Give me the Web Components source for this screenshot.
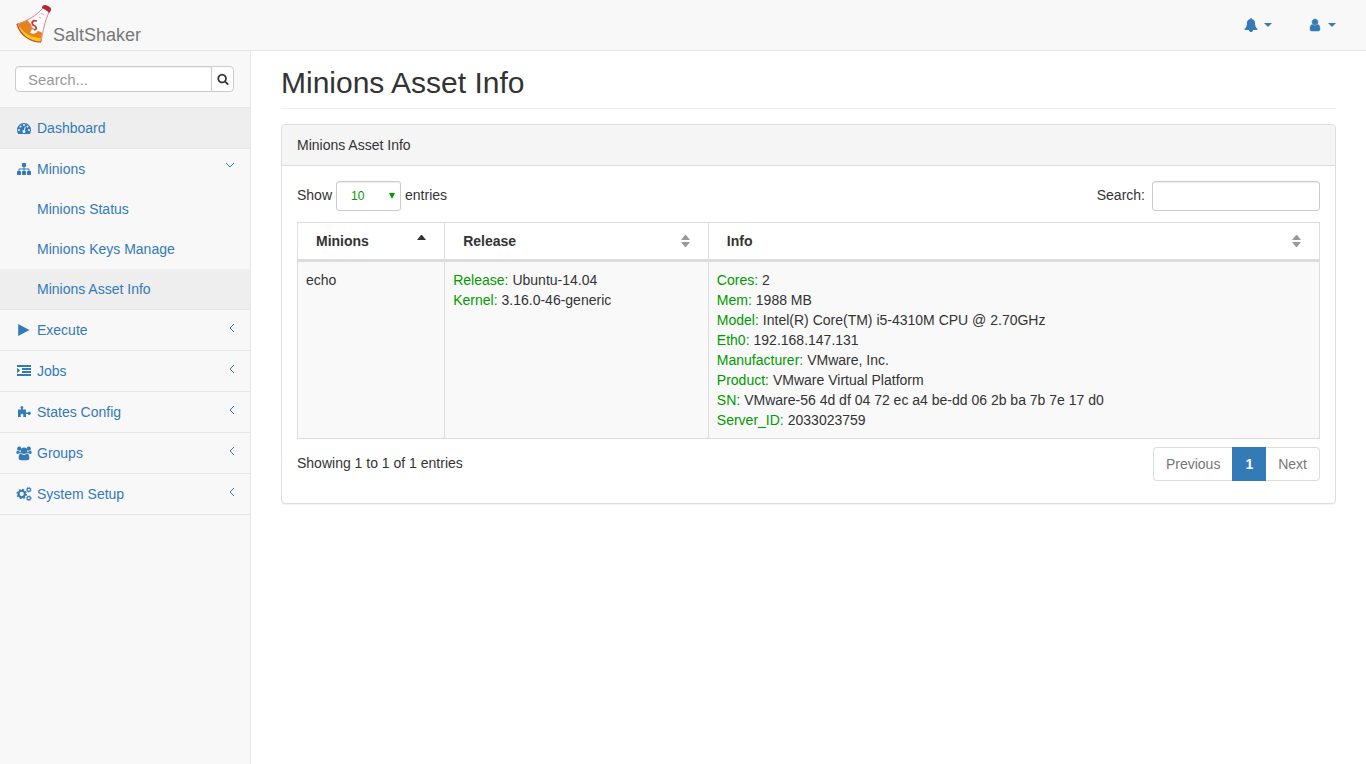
<!DOCTYPE html>
<html lang="en">
<head>
<meta charset="utf-8">
<meta name="viewport" content="width=device-width, initial-scale=1">
<title>SaltShaker - Minions Asset Info</title>
<style>
body { margin: 0; font: 14px/20px "Liberation Sans", Arial, sans-serif; color: #333; background: #fff; }
</style>
</head>
<body>
<salt-app>
  <salt-navbar slot="top"></salt-navbar>
  <salt-sidebar slot="side">
    <salt-nav-item icon="dashboard" active>Dashboard</salt-nav-item>
    <salt-nav-item icon="sitemap" arrow="down">Minions
      <salt-sub-item slot="sub">Minions Status</salt-sub-item>
      <salt-sub-item slot="sub">Minions Keys Manage</salt-sub-item>
      <salt-sub-item slot="sub" active>Minions Asset Info</salt-sub-item>
    </salt-nav-item>
    <salt-nav-item icon="play" arrow="left">Execute</salt-nav-item>
    <salt-nav-item icon="indent" arrow="left">Jobs</salt-nav-item>
    <salt-nav-item icon="puzzle" arrow="left">States Config</salt-nav-item>
    <salt-nav-item icon="users" arrow="left">Groups</salt-nav-item>
    <salt-nav-item icon="cogs" arrow="left">System Setup</salt-nav-item>
  </salt-sidebar>
  <salt-heading>Minions Asset Info</salt-heading>
  <salt-panel><span slot="title">Minions Asset Info</span><salt-asset-table></salt-asset-table></salt-panel>
</salt-app>
<script>
const ICONS = {
  bell: '<path d="M1728 1408q0 52-38 90t-90 38h-448q0 106-75 181t-181 75-181-75-75-181h-448q-52 0-90-38t-38-90q50-42 91-88t85-119.500 74.500-158.500 50-206 19.500-260q0-152 117-282.500t307-158.500q-8-19-8-39 0-40 28-68t68-28 68 28 28 68q0 20-8 39 190 28 307 158.500t117 282.500q0 139 19.500 260t50 206 74.500 158.500 85 119.500 91 88z"/>',
  user: '<path d="M1536 1399q0 109-62.500 187t-150.500 78h-854q-88 0-150.500-78t-62.500-187q0-85 8.500-160.500t31.500-152 58.500-131 94-89 134.500-34.500q131 128 313 128t313-128q76 0 134.500 34.500t94 89 58.500 131 31.500 152 8.500 160.500zm-256-887q0 159-112.500 271.500t-271.500 112.500-271.500-112.500-112.500-271.500 112.500-271.500 271.500-112.500 271.500 112.500 112.500 271.500z" stroke="currentColor" stroke-width="60"/>',
  search: '<path d="M1216 832q0-185-131.500-316.500t-316.500-131.500-316.500 131.500-131.500 316.500 131.500 316.500 316.500 131.500 316.500-131.500 131.500-316.500zm512 832q0 52-38 90t-90 38q-54 0-90-38l-343-342q-179 124-399 124-143 0-273.500-55.500t-225-150-150-225-55.500-273.500 55.500-273.500 150-225 225-150 273.500-55.500 273.500 55.500 225 150 150 225 55.500 273.500q0 220-124 399l343 343q37 37 37 90z"/>',
  dashboard: '<path d="M384 1152q0-53-37.500-90.500t-90.500-37.500-90.500 37.500-37.500 90.500 37.500 90.500 90.500 37.500 90.500-37.500 37.500-90.500zm192-448q0-53-37.500-90.500t-90.500-37.500-90.500 37.500-37.500 90.500 37.500 90.500 90.500 37.500 90.500-37.500 37.500-90.500zm428 481l101-382q6-26-7.500-48.500t-38.500-29.500-48 6.500-30 39.500l-101 382q-60 5-107 43.500t-63 98.500q-20 77 20 146t117 89 146-20 89-117q16-60-6-117t-72-91zm660-33q0-53-37.500-90.500t-90.500-37.500-90.500 37.500-37.500 90.500 37.500 90.500 90.500 37.500 90.500-37.500 37.500-90.500zm-640-640q0-53-37.500-90.500t-90.500-37.500-90.500 37.500-37.500 90.500 37.500 90.500 90.500 37.500 90.500-37.500 37.500-90.500zm448 192q0-53-37.500-90.500t-90.500-37.500-90.500 37.500-37.500 90.500 37.500 90.500 90.500 37.500 90.500-37.500 37.500-90.500zm320 448q0 261-141 483-19 29-54 29h-1402q-35 0-54-29-141-221-141-483 0-182 71-348t191-286 286-191 348-71 348 71 286 191 191 286 71 348z"/>',
  sitemap: '<path d="M1792 1248v320q0 40-28 68t-68 28h-320q-40 0-68-28t-28-68v-320q0-40 28-68t68-28h96v-192h-512v192h96q40 0 68 28t28 68v320q0 40-28 68t-68 28h-320q-40 0-68-28t-28-68v-320q0-40 28-68t68-28h96v-192h-512v192h96q40 0 68 28t28 68v320q0 40-28 68t-68 28h-320q-40 0-68-28t-28-68v-320q0-40 28-68t68-28h96v-192q0-52 38-90t90-38h512v-192h-96q-40 0-68-28t-28-68v-320q0-40 28-68t68-28h320q40 0 68 28t28 68v320q0 40-28 68t-68 28h-96v192h512q52 0 90 38t38 90v192h96q40 0 68 28t28 68z"/>',
  play: '<path d="M150 130L1590 896 150 1662z"/>',
  indent: '<path d="M0 128h1792v256H0zM640 512h1152v256H640zM640 896h1152v256H640zM0 1280h1792v256H0zM0 480l400 352-400 352z"/>',
  puzzle: '<path d="M128 576H520V450A180 180 0 1 1 740 450V576H1150V960H1400A200 200 0 1 1 1400 1160H1150V1536H800V1380A180 180 0 1 0 480 1380V1536H128z"/>',
  users: '<g transform="translate(896 896) scale(1.080) translate(-896 -896)"><circle cx="896" cy="640" r="384"/><circle cx="330" cy="384" r="256"/><circle cx="1462" cy="384" r="256"/><path d="M540 960c100 100 220 160 356 160s256-60 356-160c200 10 284 240 284 500 0 200-110 300-260 300H516c-150 0-260-100-260-300 0-260 84-490 284-500zM430 930C220 930 200 1024 128 1024 50 1024 0 960 0 860c0-170 40-260 110-260 110 110 260 150 370 100 0 90 20 170 80 230zM1362 930c210 0 230 94 302 94 78 0 128-64 128-164 0-170-40-260-110-260-110 110-260 150-370 100 0 90-20 170-80 230z"/></g>',
  cogs: '<g fill="none" stroke="currentColor"><circle cx="600" cy="896" r="410" stroke-width="270"/><circle cx="600" cy="896" r="590" stroke-width="170" stroke-dasharray="232 232"/><circle cx="1510" cy="350" r="215" stroke-width="150"/><circle cx="1510" cy="350" r="315" stroke-width="90" stroke-dasharray="124 124"/><circle cx="1510" cy="1440" r="215" stroke-width="150"/><circle cx="1510" cy="1440" r="315" stroke-width="90" stroke-dasharray="124 124"/></g>'
};

function define(name, markup, setup) {
  const template = document.createElement('template');
  template.innerHTML = markup;
  customElements.define(name, class extends HTMLElement {
    static observedAttributes = ['name', 'icon'];
    constructor() {
      super();
      this.attachShadow({ mode: 'open' }).append(template.content.cloneNode(true));
    }
    connectedCallback() { if (setup) setup(this, this.shadowRoot); }
    attributeChangedCallback() { if (setup) setup(this, this.shadowRoot); }
  });
}

define('salt-icon', `
<style>
:host { display: inline-block; width: 14px; height: 14px; flex: none; }
svg { display: block; width: 100%; height: 100%; fill: currentColor; overflow: visible; }
</style>
<svg viewBox="0 0 1792 1792" aria-hidden="true"></svg>`,
(host, root) => { root.querySelector('svg').innerHTML = ICONS[host.getAttribute('name')] || ''; });

define('salt-app', `
<style>
:host { display: flex; flex-direction: column; min-height: 100vh; }
.body { display: flex; flex: 1; }
main { flex: 1; min-width: 0; padding: 0 30px; border-left: 1px solid #e7e7e7; }
</style>
<slot name="top"></slot>
<div class="body"><slot name="side"></slot><main><slot></slot></main></div>`);

define('salt-navbar', `
<style>
:host { display: block; background: #f8f8f8; border-bottom: 1px solid #e7e7e7; }
header { display: flex; align-items: center; justify-content: space-between; height: 50px; padding: 0 30px 0 15px; }
.brand { display: flex; align-items: center; color: #777; font-size: 18px; text-decoration: none; }
.brand span { padding-top: 20px; }
.brand svg { width: 38px; height: 42px; margin-bottom: 2px; }
nav { display: flex; gap: 36px; }
button { display: flex; align-items: center; gap: 6px; padding: 0; border: 0; background: none; color: #337ab7; }
button::after { content: ""; border: 4px solid transparent; border-top-color: currentColor; border-bottom: 0; }
</style>
<header>
  <a class="brand" href="#">
    <svg viewBox="0 0 38 42" aria-hidden="true">
      <path d="M2 21C12 18 21 13 28 5l6 4c-4 9-6 18-8 30C15 39 5 32 2 21z" fill="#fff" stroke="#d98088" stroke-width="1"/>
      <path d="M3 21c5-2 9-3 12-5 0 5 5 4 5 9 0 3 5 3 7 5l-1 9C15 38 6 31 3 21z" fill="#e58123"/>
      <path d="M3 22c6 8 13 13 23 13l-1 4C14 38 6 31 3 22z" fill="#fbcb0a"/>
      <path d="M2 21c3 11 13 18 24 18" fill="none" stroke="#bd4b3d" stroke-width="1.200"/>
      <path d="M14 19c3-2 5-2 4 2 0 4 4 2 3 6-1 2-3 2-5 1" fill="none" stroke="#fff" stroke-width="4"/>
      <path d="M22 18c-4-1-6 1-4 4 3 1 5 4 1 5" fill="none" stroke="#c73743" stroke-width="1.800"/>
      <path d="M26 10l3 2M24 14l2 1" fill="none" stroke="#efb6a4" stroke-width="1.200"/>
      <path d="M27 5c0-3 3-4 6-2 4 2 4 4 1 7-1-2-4-4-7-5z" fill="#b82536"/>
    </svg>
    <span>SaltShaker</span>
  </a>
  <nav>
    <button type="button" aria-label="Notifications"><salt-icon name="bell"></salt-icon></button>
    <button type="button" aria-label="Account"><salt-icon name="user"></salt-icon></button>
  </nav>
</header>`);

define('salt-sidebar', `
<style>
:host { display: block; flex: none; width: 250px; background: #f8f8f8; }
form { display: flex; padding: 15px 16px 15px 15px; border-bottom: 1px solid #e7e7e7; }
input { flex: 1; min-width: 0; box-sizing: border-box; height: 26px; padding: 0 12px; border: 1px solid #ccc; border-radius: 4px 0 0 4px; background: #fff; font: inherit; font-size: 15px; color: #555; box-shadow: inset 0 1px 1px rgba(0,0,0,.075); }
input::placeholder { color: #999; }
button { display: flex; align-items: center; justify-content: center; box-sizing: border-box; width: 23px; height: 26px; margin-left: -1px; padding: 0; border: 1px solid #ccc; border-radius: 0 4px 4px 0; background: #fff; color: #333; }
salt-icon { width: 12px; height: 12px; }
</style>
<form role="search">
  <input type="text" placeholder="Search..." aria-label="Search">
  <button type="button" aria-label="Search"><salt-icon name="search"></salt-icon></button>
</form>
<nav><slot></slot></nav>`);

define('salt-nav-item', `
<style>
:host { display: block; border-bottom: 1px solid #e7e7e7; color: #337ab7; }
a { display: flex; align-items: center; gap: 6px; padding: 10px 15px 10px 17px; color: inherit; text-decoration: none; }
:host([active]) a { background: #eee; }
.label { flex: 1; }
svg { display: none; width: 10px; height: 10px; margin-bottom: 5px; fill: none; stroke: currentColor; }
:host([arrow]) svg { display: block; }
:host([arrow=down]) svg { transform: rotate(-90deg); }
</style>
<a href="#"><salt-icon></salt-icon><span class="label"><slot></slot></span>
<svg viewBox="0 0 10 10" aria-hidden="true"><path d="M9 1L5 5l4 4"/></svg></a>
<slot name="sub"></slot>`,
(host, root) => root.querySelector('salt-icon').setAttribute('name', host.getAttribute('icon')));

define('salt-sub-item', `
<style>
:host { display: block; }
a { display: block; padding: 10px 15px 10px 37px; color: #337ab7; text-decoration: none; }
:host([active]) a { background: #eee; }
</style>
<a href="#"><slot></slot></a>`);

define('salt-heading', `
<style>
:host { display: block; }
h1 { margin: 0 0 15px; padding: 15px 0 8px; border-bottom: 1px solid #eee; font-size: 30px; line-height: 34px; font-weight: 400; }
</style>
<h1><slot></slot></h1>`);

define('salt-panel', `
<style>
:host { display: block; border: 1px solid #ddd; border-radius: 4px; box-shadow: 0 1px 1px rgba(0,0,0,.05); background: #fff; }
.head { padding: 10px 15px; border-bottom: 1px solid #ddd; border-radius: 3px 3px 0 0; background: #f5f5f5; }
.content { padding: 15px 15px 22px; }
</style>
<div class="head"><slot name="title"></slot></div>
<div class="content"><slot></slot></div>`);

define('salt-asset-table', `
<style>
:host { display: block; }
.bar { display: flex; justify-content: space-between; align-items: center; }
.controls { margin-bottom: 11px; }
.controls label { display: flex; align-items: center; gap: 4px; }
.controls .find { gap: 7px; }
.controls label > span:not(.pick) { margin-bottom: 2px; }
.pick { display: grid; align-items: center; color: #090; }
.pick::after { content: ""; grid-area: 1 / 1; justify-self: end; margin-right: 6px; border: 3px solid transparent; border-top: 6px solid currentColor; border-bottom: 0; pointer-events: none; }
select, input { box-sizing: border-box; height: 30px; border: 1px solid #ccc; border-radius: 3px; background: #fff; font: inherit; font-size: 12px; box-shadow: inset 0 1px 1px rgba(0,0,0,.075); }
select { grid-area: 1 / 1; width: 65px; padding: 0 14px; appearance: none; color: #090; }
input { width: 168px; padding: 5px 10px; }
table { width: 100%; table-layout: fixed; border-collapse: separate; border-spacing: 0; border: solid #ddd; border-width: 1px 0 0 1px; }
th, td { box-sizing: border-box; padding: 8px; border-right: 1px solid #ddd; text-align: left; vertical-align: top; }
th { padding: 8px 18px; border-bottom: 3px solid #ddd; }
th:nth-child(1) { width: 14.400%; }
th:nth-child(2) { width: 25.800%; }
.sort { display: flex; align-items: center; justify-content: space-between; }
.sort svg { width: 9px; height: 12px; fill: #999; }
.sort .up { fill: #333; }
td { border-bottom: 1px solid #ddd; background: #f9f9f9; }
dl, dt, dd { margin: 0; }
dl div { display: flex; gap: 4px; }
dt { color: #090; }
.foot { margin-top: 8px; }
.status { margin-bottom: 2px; }
ul { display: flex; margin: 0; padding: 0; list-style: none; }
li a { display: block; padding: 6px 12px; border: 1px solid #ddd; border-right: 0; color: #777; text-decoration: none; }
li:first-child a { border-radius: 4px 0 0 4px; }
li:last-child a { border-left: 0; border-right: 1px solid #ddd; border-radius: 0 4px 4px 0; }
li .on { border-color: #337ab7; border-right: 1px solid #337ab7; background: #337ab7; color: #fff; font-weight: bold; }
</style>
<div class="bar controls">
  <label><span>Show</span> <span class="pick"><select><option>10</option><option>25</option><option>50</option><option>100</option></select></span> <span>entries</span></label>
  <label class="find"><span>Search:</span> <input type="search"></label>
</div>
<table>
  <thead><tr>
    <th scope="col" aria-sort="ascending"><div class="sort">Minions<svg class="up" viewBox="0 0 9 12" aria-hidden="true"><path d="M0 5l4-5h1l4 5z"/></svg></div></th>
    <th scope="col"><div class="sort">Release<svg viewBox="0 0 9 12" aria-hidden="true"><path d="M0 5l4-5h1l4 5zM0 7h9l-4 5H4z"/></svg></div></th>
    <th scope="col"><div class="sort">Info<svg viewBox="0 0 9 12" aria-hidden="true"><path d="M0 5l4-5h1l4 5zM0 7h9l-4 5H4z"/></svg></div></th>
  </tr></thead>
  <tbody><tr>
    <td>echo</td>
    <td><dl>
      <div><dt>Release:</dt><dd>Ubuntu-14.04</dd></div>
      <div><dt>Kernel:</dt><dd>3.16.0-46-generic</dd></div>
    </dl></td>
    <td><dl>
      <div><dt>Cores:</dt><dd>2</dd></div>
      <div><dt>Mem:</dt><dd>1988 MB</dd></div>
      <div><dt>Model:</dt><dd>Intel(R) Core(TM) i5-4310M CPU @ 2.70GHz</dd></div>
      <div><dt>Eth0:</dt><dd>192.168.147.131</dd></div>
      <div><dt>Manufacturer:</dt><dd>VMware, Inc.</dd></div>
      <div><dt>Product:</dt><dd>VMware Virtual Platform</dd></div>
      <div><dt>SN:</dt><dd>VMware-56 4d df 04 72 ec a4 be-dd 06 2b ba 7b 7e 17 d0</dd></div>
      <div><dt>Server_ID:</dt><dd>2033023759</dd></div>
    </dl></td>
  </tr></tbody>
</table>
<div class="bar foot">
  <div class="status" role="status">Showing 1 to 1 of 1 entries</div>
  <ul><li><a href="#">Previous</a></li><li><a class="on" href="#" aria-current="page">1</a></li><li><a href="#">Next</a></li></ul>
</div>`);
</script>
</body>
</html>
